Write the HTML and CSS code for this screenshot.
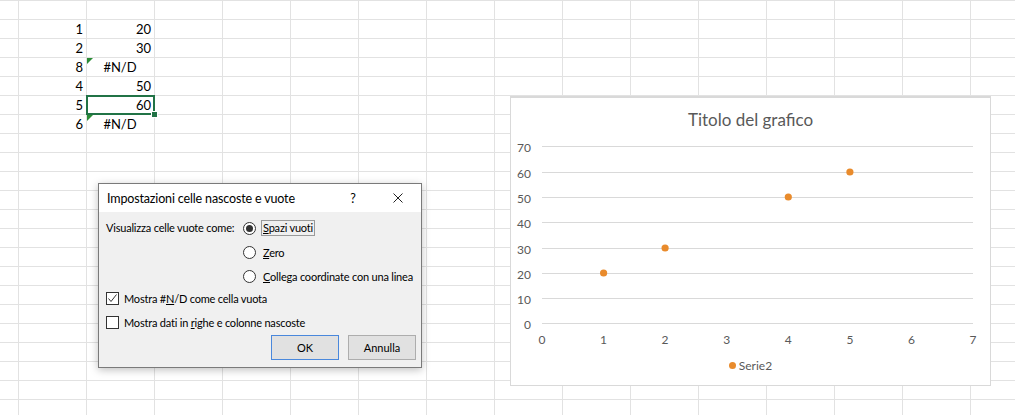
FILE: index.html
```html
<!DOCTYPE html>
<html lang="it">
<head>
    <meta charset="UTF-8">
    <meta name="viewport" content="width=device-width, initial-scale=1.0">
    <title>Foglio1 - Impostazioni celle nascoste e vuote</title>
    <link rel="stylesheet" href="styles.css">
</head>
<body>
    <div class="sheet">
        <div class="data">
            <div class="cell num">1</div>
            <div class="cell num">20</div>
            <div class="cell num">2</div>
            <div class="cell num">30</div>
            <div class="cell num">8</div>
            <div class="cell err flag">#N/D</div>
            <div class="cell num">4</div>
            <div class="cell num">50</div>
            <div class="cell num">5</div>
            <div class="cell num sel">60</div>
            <div class="cell num">6</div>
            <div class="cell err flag">#N/D</div>
        </div>
    </div>

    <!-- finestra di dialogo -->
    <div class="dialog">
        <div class="dlg-title">
            <span class="dlg-caption">Impostazioni celle nascoste e vuote</span>
            <span class="dlg-help">?</span>
            <span class="dlg-close">
                <svg width="10" height="10" viewBox="0 0 10 10"><path d="M0.5 0.5L9.5 9.5M9.5 0.5L0.5 9.5" stroke="#222" stroke-width="1"/></svg>
            </span>
        </div>
        <div class="dlg-body">
            <div class="empty-row">
                <span class="empty-label">Visualizza celle vuote come:</span>
                <div class="radios">
                    <label class="opt"><span class="radio on"></span><span class="focus"><u>S</u>pazi vuoti</span></label>
                    <label class="opt"><span class="radio"></span><span><u>Z</u>ero</span></label>
                    <label class="opt"><span class="radio"></span><span><u>C</u>ollega coordinate con una linea</span></label>
                </div>
            </div>
            <div class="checks">
                <label class="opt">
                    <span class="check">
                        <svg width="11" height="11" viewBox="0 0 11 11"><path d="M1.5 5.5L4 8.5L9.5 1.5" fill="none" stroke="#333" stroke-width="1"/></svg>
                    </span>
                    <span>Mostra #<u>N</u>/D come cella vuota</span>
                </label>
                <label class="opt"><span class="check"></span><span>Mostra dati in <u>r</u>ighe e colonne nascoste</span></label>
            </div>
            <div class="dlg-buttons">
                <button class="btn default">OK</button>
                <button class="btn">Annulla</button>
            </div>
        </div>
    </div>

    <!-- grafico a dispersione -->
    <div class="chart">
        <div class="chart-title">Titolo del grafico</div>
        <svg class="plot" width="479" height="215" viewBox="0 0 479 215">
            <g class="grid">
                <line x1="31" x2="462" y1="9.5" y2="9.5"/>
                <line x1="31" x2="462" y1="35.5" y2="35.5"/>
                <line x1="31" x2="462" y1="60.5" y2="60.5"/>
                <line x1="31" x2="462" y1="85.5" y2="85.5"/>
                <line x1="31" x2="462" y1="111.5" y2="111.5"/>
                <line x1="31" x2="462" y1="136.5" y2="136.5"/>
                <line x1="31" x2="462" y1="161.5" y2="161.5"/>
                <line x1="31" x2="462" y1="186.5" y2="186.5"/>
            </g>
            <g class="y-labels">
                <text x="20" y="10">70</text>
                <text x="20" y="36">60</text>
                <text x="20" y="61">50</text>
                <text x="20" y="86">40</text>
                <text x="20" y="112">30</text>
                <text x="20" y="137">20</text>
                <text x="20" y="162">10</text>
                <text x="20" y="187">0</text>
            </g>
            <g class="x-labels">
                <text x="31" y="202">0</text>
                <text x="92.6" y="202">1</text>
                <text x="154.1" y="202">2</text>
                <text x="215.7" y="202">3</text>
                <text x="277.3" y="202">4</text>
                <text x="338.9" y="202">5</text>
                <text x="400.4" y="202">6</text>
                <text x="462" y="202">7</text>
            </g>
            <g class="points">
                <circle cx="92.6" cy="136" r="3.6"/>
                <circle cx="154.1" cy="111" r="3.6"/>
                <circle cx="277.3" cy="60" r="3.6"/>
                <circle cx="338.9" cy="35" r="3.6"/>
            </g>
        </svg>
        <div class="legend"><span class="legend-dot"></span>Serie2</div>
    </div>
</body>
</html>
```

FILE: styles.css
```css
body {
    margin: 0;
    width: 1015px;
    height: 415px;
    overflow: hidden;
    position: relative;
    background: #fff;
    font-family: Lato, "Liberation Sans", sans-serif;
    color: #000;
}

/* foglio di lavoro */
.sheet {
    display: grid;
    grid-template-columns: 18px repeat(14, 68px);
    grid-template-rows: repeat(22, 19px);
    height: 415px;
    background-image:
        linear-gradient(to right, #e2e2e2 1px, transparent 1px),
        linear-gradient(to bottom, #e2e2e2 1px, transparent 1px);
    background-size: 68px 19px;
    background-position: 18px 0;
}

.data {
    grid-column: 2 / 4;
    grid-row: 2 / 8;
    display: grid;
    grid-template-columns: 68px 68px;
    grid-auto-rows: 19px;
}

.cell {
    position: relative;
    font-size: 13px;
    line-height: 17px;
    padding: 2px 3px 0;
}

.num {
    text-align: right;
}

.err {
    text-align: center;
}

.flag::before {
    content: "";
    position: absolute;
    left: 1px;
    top: 1px;
    border-top: 6px solid #2a8c36;
    border-right: 6px solid transparent;
}

.sel::after {
    content: "";
    position: absolute;
    left: 0;
    top: 0;
    width: 69px;
    height: 20px;
    box-sizing: border-box;
    border: 2px solid #217346;
}

.sel::before {
    content: "";
    position: absolute;
    left: 66px;
    top: 17px;
    width: 5px;
    height: 5px;
    background: #217346;
    outline: 1px solid #fff;
    z-index: 1;
}

/* finestra di dialogo */
.dialog {
    position: absolute;
    left: 98px;
    top: 183px;
    width: 324px;
    height: 185px;
    box-sizing: border-box;
    border: 1px solid #7a7a7a;
    background: #f0f0f0;
    box-shadow: 0 2px 8px rgba(0, 0, 0, 0.25);
    font-family: Lato, "Noto Sans", sans-serif;
    font-size: 11px;
    letter-spacing: -0.2px;
    color: #000;
    white-space: nowrap;
}

.dlg-title {
    display: flex;
    align-items: center;
    height: 28px;
    background: #fff;
    padding-left: 8px;
}

.dlg-caption {
    flex: 1;
    font-size: 12.5px;
    letter-spacing: -0.15px;
}

.dlg-help {
    width: 30px;
    margin-right: 7px;
    text-align: center;
    font-size: 12.5px;
}

.dlg-close {
    width: 46px;
    display: flex;
    justify-content: center;
    align-items: center;
}

.dlg-body {
    padding: 4px 5px 0 7px;
}

.empty-row {
    display: flex;
}

.empty-label {
    width: 137px;
    line-height: 24px;
}

.opt {
    display: flex;
    align-items: center;
    height: 24px;
}

.radio {
    flex: none;
    width: 13px;
    height: 13px;
    box-sizing: border-box;
    border: 1px solid #333;
    border-radius: 50%;
    background: #fff;
    margin-right: 5px;
    position: relative;
}

.radio.on::after {
    content: "";
    position: absolute;
    left: 2px;
    top: 2px;
    width: 7px;
    height: 7px;
    border-radius: 50%;
    background: #333;
}

.focus {
    border: 1px solid #9a9a9a;
    padding: 0 1px;
    line-height: 14px;
}

.opt .radio + span:not(.focus) {
    padding-left: 2px;
}

.checks {
    margin-top: -2px;
}

.check {
    flex: none;
    width: 13px;
    height: 13px;
    box-sizing: border-box;
    border: 1px solid #333;
    background: #fff;
    margin-right: 5px;
    display: flex;
}

.dlg-buttons {
    display: flex;
    justify-content: flex-end;
    gap: 9px;
    margin-top: 1px;
}

.btn {
    width: 68px;
    height: 25px;
    font: inherit;
    letter-spacing: 0;
    color: #000;
    background: #e1e1e1;
    border: 1px solid #adadad;
    padding: 0;
}

.btn.default {
    border-color: #4a88dc;
}

/* grafico */
.chart {
    position: absolute;
    left: 510px;
    top: 96px;
    width: 481px;
    height: 290px;
    box-sizing: border-box;
    border: 1px solid #d9d9d9;
    border-top-width: 2px;
    background: #fff;
    color: #595959;
}

.chart-title {
    height: 39px;
    padding-top: 4px;
    box-sizing: border-box;
    text-align: center;
    font-size: 17px;
    line-height: 35px;
}

.plot {
    display: block;
}

.grid line {
    stroke: #d9d9d9;
    stroke-width: 1;
}

.plot text {
    font-family: Lato, sans-serif;
    font-size: 12px;
    fill: #595959;
    dominant-baseline: central;
}

.y-labels text {
    text-anchor: end;
}

.x-labels text {
    text-anchor: middle;
}

.points circle {
    fill: #e98b2c;
}

.legend {
    height: 26px;
    display: flex;
    justify-content: center;
    align-items: center;
    font-size: 12px;
}

.legend-dot {
    width: 7px;
    height: 7px;
    border-radius: 50%;
    background: #e98b2c;
    margin-right: 3px;
}
```
